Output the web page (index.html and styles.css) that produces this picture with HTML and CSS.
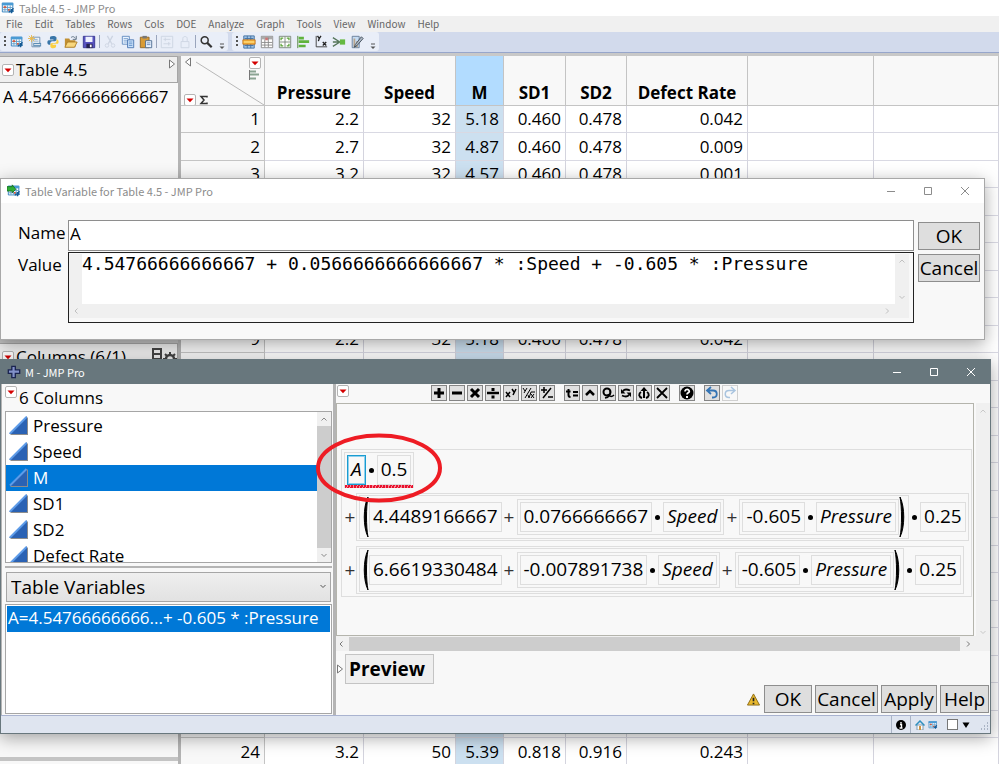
FILE: index.html
```
<!DOCTYPE html>
<html lang="en">
<head>
    <meta charset="UTF-8">
    <meta name="viewport" content="width=device-width, initial-scale=1.0">
    <title>Table 4.5 - JMP Pro</title>
    <link rel="stylesheet" href="styles.css">
</head>
<body>
    <!-- Shared icons -->
    <svg class="sprite" aria-hidden="true">
        <symbol id="red-menu" viewBox="0 0 12 12">
            <rect x="0.5" y="0.5" width="11" height="11" rx="1.5" fill="#fff" stroke="#b4b4b4"/>
            <path d="M2.5 4.5h7L6 8.3z" fill="#d40000"/>
        </symbol>
        <symbol id="continuous" viewBox="0 0 20 20">
            <path d="M1 19 19 1v18z" fill="#8d8d8d"/>
            <path d="M0 18 18 0v18z" fill="#2a62b4"/>
            <path d="M1 17.5 17.5 1" stroke="#5d9be8" stroke-width="2"/>
        </symbol>
        <symbol id="table-icon" viewBox="0 0 16 16">
            <path d="M1.500 2.500h12v10h-12z" fill="#fff" stroke="#2678b8"/>
            <path d="M1 2h13v3H1z" fill="#4a9bd4"/>
            <path d="M4.500 5v7M7.500 5v7M10.500 5v7M2 7.500h11M2 10h11" stroke="#5c9cc8"/>
            <path d="M3 6h3v2H3zM8 9h2v2H8z" fill="#d85a3c"/>
            <path d="M9 13c2-4 3 2 5-5M12 9v5M9.500 11.500h5" stroke="#155a94" stroke-width="1.500" fill="none"/>
        </symbol>
        <symbol id="min" viewBox="0 0 10 10"><path d="M1 5.500h8" stroke="currentColor"/></symbol>
        <symbol id="max" viewBox="0 0 10 10"><path d="M1.500 1.500h7v7h-7z" fill="none" stroke="currentColor"/></symbol>
        <symbol id="close" viewBox="0 0 10 10"><path d="M1 1l8 8M9 1 1 9" stroke="currentColor"/></symbol>
        <symbol id="chev-up" viewBox="0 0 8 8"><path d="M1.500 5.500 4 3l2.500 2.500" fill="none" stroke="currentColor"/></symbol>
        <symbol id="chev-down" viewBox="0 0 8 8"><path d="M1.500 3 4 5.500 6.500 3" fill="none" stroke="currentColor"/></symbol>
        <symbol id="chev-left" viewBox="0 0 8 8"><path d="M5.500 1.500 3 4l2.500 2.500" fill="none" stroke="currentColor"/></symbol>
        <symbol id="chev-right" viewBox="0 0 8 8"><path d="M3 1.500 5.500 4 3 6.500" fill="none" stroke="currentColor"/></symbol>
        <symbol id="more" viewBox="0 0 6 8"><path d="M1 2h4" stroke="#555"/><path d="M0.500 4.500h5L3 7z" fill="#555"/></symbol>
        <symbol id="lparen" viewBox="0 0 6 40"><path d="M5 0C0 10 0 30 5 40 3 30 3 10 5 0z" fill="#000" stroke="#000"/></symbol>
        <symbol id="rparen" viewBox="0 0 6 40"><path d="M1 0C6 10 6 30 1 40 3 30 3 10 1 0z" fill="#000" stroke="#000"/></symbol>
    </svg>

    <!-- Data table window -->
    <div class="main-window">
        <div class="main-title"><svg class="icon"><use href="#table-icon"/></svg><span>Table 4.5 - JMP Pro</span></div>
        <nav class="menu-bar">
            <a href="#">File</a><a href="#">Edit</a><a href="#">Tables</a><a href="#">Rows</a><a href="#">Cols</a><a href="#">DOE</a><a href="#">Analyze</a><a href="#">Graph</a><a href="#">Tools</a><a href="#">View</a><a href="#">Window</a><a href="#">Help</a>
        </nav>
        <div class="tool-bar">
            <div class="tool-group">
                <span class="grip"></span>
                <button class="tool" aria-label="New table"><svg class="icon"><use href="#table-icon"/></svg></button>
                <button class="tool" aria-label="New script"><svg class="icon" viewBox="0 0 16 16"><path d="M4.500 2.500h9v11h-9z" fill="#eef4fa" stroke="#6b8cab"/><path d="M6 9h9v4H6z" fill="#5d8db5"/><path d="M7 11h7" stroke="#fff"/><path d="M6 5h5M6 7h6" stroke="#8aa8c4"/><path d="M4 0v8M0 4h8M1 1l6 6M7 1 1 7" stroke="#e8b84a"/></svg></button>
                <button class="tool" aria-label="Python"><svg class="icon" viewBox="0 0 16 16"><path d="M8 1c-3 0-3.500 1-3.500 2.500V5H8.500v1H3C1 6 1 11 3.500 11H5V9c0-1 1-2 2-2h3c1 0 2-1 2-2V3c0-1.500-2-2-4-2z" fill="#3875a8"/><path d="M8 15c3 0 3.500-1 3.500-2.500V11H7.500v-1H13c2 0 2-5-.5-5H12v2c0 1-1 2-2 2H7c-1 0-2 1-2 2v2c0 1.500 1.500 2 3 2z" fill="#fbd040"/></svg></button>
                <button class="tool" aria-label="Open"><svg class="icon" viewBox="0 0 16 16"><path d="M1 14V4h5l1 2h6v8z" fill="#c18f31"/><path d="M1 14 4 8h11l-3 6z" fill="#f8d77d" stroke="#aa7b25"/><path d="M8 3c2-2 4-1 5 1M14 1v4h-4" stroke="#536879" fill="none"/></svg></button>
                <button class="tool" aria-label="Save"><svg class="icon" viewBox="0 0 16 16"><path d="M1.500 1.500h13v13h-13z" fill="#5753c0" stroke="#34318e"/><path d="M4 2h8v6H4z" fill="#eef1ff"/><path d="M5 10h7v5H5z" fill="#24224f"/><path d="M9 11h2v3H9z" fill="#fff"/></svg></button>
                <span class="rule"></span>
                <button class="tool faded" aria-label="Cut"><svg class="icon" viewBox="0 0 16 16"><path d="M5 1l5 9M11 1 6 10" stroke="#8d9bb0" stroke-width="1.500"/><circle cx="4.500" cy="12" r="2" fill="none" stroke="#8d9bb0"/><circle cx="11.500" cy="12" r="2" fill="none" stroke="#8d9bb0"/></svg></button>
                <button class="tool" aria-label="Copy"><svg class="icon" viewBox="0 0 16 16"><path d="M1.500 1.500h8v9h-8z" fill="#eaf4ff" stroke="#5b87bd"/><path d="M3 4h5M3 6h5M3 8h5" stroke="#80a6d2"/><path d="M7.500 5.500h7v9h-7z" fill="#cae1fa" stroke="#4774b0"/><path d="M9 8h4M9 10h4M9 12h4" stroke="#6595cc"/></svg></button>
                <button class="tool" aria-label="Paste"><svg class="icon" viewBox="0 0 16 16"><path d="M1.500 2.500h10v12h-10z" fill="#d89b35" stroke="#8b6426"/><path d="M4 1h5v3H4z" fill="#777"/><path d="M7.500 6.500h7v8h-7z" fill="#e9f3ff" stroke="#48698f"/><path d="M9 9h4M9 11h4" stroke="#6286b4"/></svg></button>
                <span class="rule"></span>
                <button class="tool faded" aria-label="Filter"><svg class="icon" viewBox="0 0 16 16"><path d="M1.500 1.500h13v13h-13zM4 5h8M4 10h8M6 3v4M10 8v4" fill="none" stroke="#8d9bb0"/></svg></button>
                <button class="tool faded" aria-label="Lock"><svg class="icon" viewBox="0 0 16 16"><path d="M3.500 7.500h9v7h-9zM5.500 7V4c0-3 5-3 5 0v3" fill="none" stroke="#8d9bb0"/></svg></button>
                <span class="rule"></span>
                <button class="tool" aria-label="Search"><svg class="icon" viewBox="0 0 16 16"><circle cx="6.500" cy="6" r="4" fill="none" stroke="#333" stroke-width="1.700"/><path d="m9.500 9 5 5" stroke="#333" stroke-width="2.500"/></svg></button>
                <svg class="more"><use href="#more"/></svg>
            </div>
            <div class="tool-group">
                <span class="grip"></span>
                <button class="tool" aria-label="Data filter"><svg class="icon" viewBox="0 0 16 16"><path d="M2 1h12v14H2z" fill="#9fc2e5" stroke="#416fa0"/><path d="M6 1v14M10 1v14M3 4h10M3 12h10" stroke="#416fa0"/><path d="M1 5.500h14v5H1z" fill="#f9b63c" stroke="#c0711b"/><path d="M2 8h12" stroke="#fff0a5"/></svg></button>
                <button class="tool" aria-label="Summary"><svg class="icon" viewBox="0 0 16 16"><path d="M1.500 1.500h13v13h-13z" fill="#fff" stroke="#858585"/><path d="M2 2h12v3H2z" fill="#aaa"/><path d="M5.500 5v9M9.500 3v11M2 8.500h12M2 11.500h12" stroke="#858585"/><path d="M6 3h3v3H6z" fill="#cb7575"/></svg></button>
                <button class="tool" aria-label="Tabulate"><svg class="icon" viewBox="0 0 16 16"><path d="M1.500 1.500h13v13h-13z" fill="#fff" stroke="#748074"/><path d="M8 2v12M2 8h12" stroke="#748074"/><path d="M3.500 6V3.500H6M12.500 6V3.500H10M3.500 10v2.500H6M12.500 10v2.500H10" fill="none" stroke="#5da43a" stroke-width="1.500"/></svg></button>
                <button class="tool" aria-label="Distribution"><svg class="icon" viewBox="0 0 16 16"><path d="M2 1v14" stroke="#4d7e39"/><path d="M3 2h6v3H3zM3 6h12v3H3zM3 11h8v3H3z" fill="#5fb33c"/></svg></button>
                <button class="tool" aria-label="Fit Y by X"><svg class="icon" viewBox="0 0 16 16"><path d="M2.500 1v12.500H15" fill="none" stroke="#333"/><path d="m4 1 2 3 2-3M6 4 5 7M10 8l4 4M14 8l-4 4" fill="none" stroke="#222" stroke-width="1.500"/></svg></button>
                <button class="tool" aria-label="Fit model"><svg class="icon" viewBox="0 0 16 16"><path d="M1 3l8 5M1 8h8M1 13l8-5" stroke="#55755a" stroke-width="1.500"/><path d="M9 5h6v6H9z" fill="#65b942"/></svg></button>
                <button class="tool" aria-label="Graph builder"><svg class="icon" viewBox="0 0 16 16"><path d="M2.500 1.500h8v13h-8z" fill="#c5dcf4" stroke="#637993"/><path d="M5 4v10M8 7v7" stroke="#b9a58d" stroke-width="2"/><path d="m6 11 7-9 2 2-7 8-3 2z" fill="#aeb9c5" stroke="#3c4855"/></svg></button>
                <svg class="more"><use href="#more"/></svg>
            </div>
        </div>

        <div class="workspace">
            <aside class="side">
                <section class="side-panel first">
                    <h2 class="side-head"><svg class="red"><use href="#red-menu"/></svg><span>Table 4.5</span>
                        <svg class="expand" viewBox="0 0 8 10"><path d="M1.500 1v8L6.500 5z" fill="#fff" stroke="#777"/></svg></h2>
                    <div class="variable">A 4.54766666666667</div>
                </section>
                <section class="side-panel grow">
                    <h2 class="side-head"><svg class="red"><use href="#red-menu"/></svg><span>Columns (6/1)</span>
                        <svg class="col-tools" viewBox="0 0 26 18"><path d="M2 1h8v16H2zM2 6h8M2 11h8" fill="none" stroke="#444" stroke-width="2"/><circle cx="19" cy="11" r="4" fill="none" stroke="#444" stroke-width="2.500"/><path d="M19 4v3M19 15v3M12 11h3M23 11h3M14 6l2 2M24 6l-2 2M14 16l2-2M24 16l-2-2" stroke="#444" stroke-width="2"/></svg></h2>
                </section>
                <section class="side-panel last"></section>
            </aside>

            <table class="grid">
                <colgroup>
                    <col class="c-row"><col class="c-pressure"><col class="c-speed"><col class="c-m"><col class="c-sd1"><col class="c-sd2"><col class="c-defect"><col class="c-blank"><col>
                </colgroup>
                <thead>
                    <tr>
                        <th class="corner">
                            <svg viewBox="0 0 83 49">
                                <path d="M15 6 83 49" stroke="#b8b8b8"/>
                                <path d="M9.500 2v8L4.500 6z" fill="#fff" stroke="#777"/>
                                <use href="#red-menu" x="68" y="1" width="12" height="12"/>
                                <path d="M68.500 14v10" stroke="#777"/><path d="M69 15.500h6M69 18.500h9M69 22.500h6" stroke="#8aa392" stroke-width="2"/>
                                <use href="#red-menu" x="3" y="38" width="12" height="12"/>
                                <path d="M26 41.500v-1h-6l3 3.500-3 3.500h6v-1" fill="none" stroke="#333" stroke-width="1.500"/>
                            </svg>
                        </th>
                        <th>Pressure</th><th>Speed</th><th class="picked">M</th><th>SD1</th><th>SD2</th><th>Defect Rate</th><th></th><th></th>
                    </tr>
                </thead>
                <tbody id="rows"></tbody>
            </table>
        </div>
    </div>

    <!-- Table variable dialog -->
    <div class="window variable-window">
        <div class="title-bar light">
            <svg class="icon" viewBox="0 0 16 16"><use href="#table-icon"/><path d="M0 3h6V1l4 5-4 4V8H0z" fill="#2fae37" stroke="#16721f"/></svg>
            <span>Table Variable for Table 4.5 - JMP Pro</span>
            <div class="controls"><svg><use href="#min"/></svg><svg><use href="#max"/></svg><svg><use href="#close"/></svg></div>
        </div>
        <div class="variable-body">
            <div class="fields">
                <label for="name">Name</label>
                <input id="name" type="text" value="A">
                <label for="value">Value</label>
                <div class="value-box">
                    <textarea id="value" wrap="off">4.54766666666667 + 0.0566666666666667 * :Speed + -0.605 * :Pressure</textarea>
                    <div class="v-bar"><svg><use href="#chev-up"/></svg><svg><use href="#chev-down"/></svg></div>
                    <div class="h-bar"><svg><use href="#chev-left"/></svg><svg><use href="#chev-right"/></svg></div>
                </div>
            </div>
            <div class="side-buttons">
                <button class="btn">OK</button>
                <button class="btn">Cancel</button>
            </div>
        </div>
    </div>

    <!-- Formula editor -->
    <div class="window formula-window">
        <div class="title-bar dark">
            <svg class="icon" viewBox="0 0 16 16"><path d="M5.500 1.500h4v4h5v4h-5v5h-4v-5h-4v-4h4z" fill="#8291ca" stroke="#1b2450" stroke-width="1.500"/></svg>
            <span>M - JMP Pro</span>
            <div class="controls"><svg><use href="#min"/></svg><svg><use href="#max"/></svg><svg><use href="#close"/></svg></div>
        </div>
        <div class="formula-body">
            <div class="picker">
                <div class="picker-head"><svg class="red"><use href="#red-menu"/></svg><span>6 Columns</span></div>
                <div class="column-box">
                    <ul class="columns">
                        <li><svg><use href="#continuous"/></svg>Pressure</li>
                        <li><svg><use href="#continuous"/></svg>Speed</li>
                        <li class="selected"><svg><use href="#continuous"/></svg>M</li>
                        <li><svg><use href="#continuous"/></svg>SD1</li>
                        <li><svg><use href="#continuous"/></svg>SD2</li>
                        <li><svg><use href="#continuous"/></svg>Defect Rate</li>
                    </ul>
                    <div class="scroll"><svg><use href="#chev-up"/></svg><span class="thumb"></span><svg><use href="#chev-down"/></svg></div>
                </div>
                <div class="splitter"></div>
                <div class="drop">
                    <select aria-label="Element list"><option>Table Variables</option></select>
                    <svg><use href="#chev-down"/></svg>
                </div>
                <ul class="variables"><li>A=4.54766666666...+ -0.605 * :Pressure</li></ul>
            </div>

            <div class="editor">
                <div class="editor-tools">
                    <svg class="red"><use href="#red-menu"/></svg>
                    <div class="keys">
                        <button aria-label="Add"><svg viewBox="0 0 14 14"><path d="M7 2v10M2 7h10" stroke="#000" stroke-width="3"/></svg></button>
                        <button aria-label="Subtract"><svg viewBox="0 0 14 14"><path d="M2 7h10" stroke="#000" stroke-width="3"/></svg></button>
                        <button aria-label="Multiply"><svg viewBox="0 0 14 14"><path d="m3 3 8 8M11 3l-8 8" stroke="#000" stroke-width="3"/></svg></button>
                        <button aria-label="Divide"><svg viewBox="0 0 14 14"><path d="M1 7h12" stroke="#000" stroke-width="2.500"/><path d="M5.500 2h3v3h-3zM5.500 9.500h3v3h-3z"/></svg></button>
                        <button aria-label="Power"><svg viewBox="0 0 14 14"><path d="m2 6 4 5M6 6l-4 5M8 3l2 3M12 3l-3 6" fill="none" stroke="#000" stroke-width="1.500"/></svg></button>
                        <button aria-label="Root"><svg viewBox="0 0 14 14"><path d="m1 2 2 3M5 2 2 7M3 12l6-10M6 9l1 3 2-6h4M9 8l3 4M12 8l-3 4" fill="none" stroke="#000"/></svg></button>
                        <button aria-label="Change sign"><svg viewBox="0 0 14 14"><path d="M4 1v6M1 4h6M3 12l8-10M8 11h5" stroke="#000" stroke-width="1.500"/></svg></button>
                        <i></i>
                        <button aria-label="Local variable"><svg viewBox="0 0 14 14"><path d="M3.500 3v6c0 2 1 2 2 2M1 5.500h4.500M8 6h5M8 9.500h5" fill="none" stroke="#000" stroke-width="2"/></svg></button>
                        <button aria-label="Insert"><svg viewBox="0 0 14 14"><path d="m3 9 4-4 4 4" fill="none" stroke="#000" stroke-width="2.500"/></svg></button>
                        <button aria-label="Delete expression"><svg viewBox="0 0 14 14"><circle cx="6" cy="6" r="3.500" fill="none" stroke="#000" stroke-width="2"/><path d="M4 12c5-1 6-4 5-8M7 8c1 3 4 3 6 1" fill="none" stroke="#000" stroke-width="1.500"/></svg></button>
                        <button aria-label="Switch"><svg viewBox="0 0 14 14"><path d="M4 5.500c1-3 5-2 7-1M10 8.500c-1 3-5 2-7 1" fill="none" stroke="#000" stroke-width="1.800"/><path d="M2 3v4.500h4.500zM12 11V6.500H7.500z"/></svg></button>
                        <button aria-label="Peel"><svg viewBox="0 0 14 14"><path d="M7 4v8M4 6c-3 2-2 5 1 6M10 6c3 2 2 5-1 6" fill="none" stroke="#000" stroke-width="2"/><path d="m3.500 5 3.500-4 3.500 4z"/></svg></button>
                        <button aria-label="Delete"><svg viewBox="0 0 14 14"><path d="m2 2 10 10M12 2 2 12" stroke="#000" stroke-width="1.800"/></svg></button>
                        <i></i>
                        <button aria-label="Help"><svg viewBox="0 0 14 14"><circle cx="7" cy="7" r="6.500"/><path d="M5 5.500c0-3 4.500-2.500 4.300 0C9 7 7 6.500 7 8.500" fill="none" stroke="#fff" stroke-width="1.700"/><path d="M6 10h2v2H6z" fill="#fff"/></svg></button>
                        <i></i>
                        <button aria-label="Undo"><svg viewBox="0 0 14 14"><path d="M6 1 2 4.500 6 8M2 4.500h6c5 0 5 7 0 7H7" fill="none" stroke="#3474b4" stroke-width="1.800"/></svg></button>
                        <button aria-label="Redo" class="off"><svg viewBox="0 0 14 14"><path d="m8 1 4 3.500L8 8M12 4.500H6c-5 0-5 7 0 7h1" fill="none" stroke="#a9c4df" stroke-width="1.500"/></svg></button>
                    </div>
                </div>
                <div class="canvas-row">
                    <div class="canvas">
                        <div class="expr">
                            <div class="term start"><span class="box var current">A</span><b></b><span class="box">0.5</span></div>
                            <div class="line">
                                <span class="plus">+</span>
                                <div class="term outer">
                                    <div class="term group"><svg class="paren"><use href="#lparen"/></svg><span class="box">4.4489166667</span><span class="plus">+</span>
                                        <div class="term"><span class="box">0.0766666667</span><b></b><span class="box var">Speed</span></div><span class="plus">+</span>
                                        <div class="term"><span class="box">-0.605</span><b></b><span class="box var">Pressure</span></div><svg class="paren"><use href="#rparen"/></svg>
                                    </div><b></b><span class="box">0.25</span>
                                </div>
                            </div>
                            <div class="line">
                                <span class="plus">+</span>
                                <div class="term outer">
                                    <div class="term group"><svg class="paren"><use href="#lparen"/></svg><span class="box">6.6619330484</span><span class="plus">+</span>
                                        <div class="term"><span class="box">-0.007891738</span><b></b><span class="box var">Speed</span></div><span class="plus">+</span>
                                        <div class="term"><span class="box">-0.605</span><b></b><span class="box var">Pressure</span></div><svg class="paren"><use href="#rparen"/></svg>
                                    </div><b></b><span class="box">0.25</span>
                                </div>
                            </div>
                        </div>
                    </div>
                    <div class="canvas-v"><svg><use href="#chev-up"/></svg><svg><use href="#chev-down"/></svg></div>
                </div>
                <div class="canvas-h"><svg><use href="#chev-left"/></svg><span class="thumb"></span><svg><use href="#chev-right"/></svg></div>
                <div class="preview"><svg viewBox="0 0 8 10"><path d="M1.500 1v8L6.500 5z" fill="#fff" stroke="#777"/></svg><button>Preview</button></div>
                <div class="actions">
                    <svg viewBox="0 0 14 14"><path d="M7 1 13.500 13H.5z" fill="#e9b92e" stroke="#8a6a13"/><path d="M7 5v4M7 10.500V12" stroke="#222" stroke-width="1.800"/></svg>
                    <button class="btn ok">OK</button>
                    <button class="btn cancel">Cancel</button>
                    <button class="btn apply">Apply</button>
                    <button class="btn help">Help</button>
                </div>
            </div>
        </div>
        <div class="status">
            <div class="cell"><svg viewBox="0 0 10 10"><circle cx="5" cy="5" r="5"/><path d="M5 2v1.500M4 4.500h1.500V8M3.500 8h3" stroke="#fff" stroke-width="1.400" fill="none"/></svg></div>
            <div class="cell">
                <svg viewBox="0 0 10 10"><path d="M2 5h6v5H2z" fill="#fff" stroke="#7e9bb0"/><path d="M.5 5.500 5 1l4.500 4.500" fill="none" stroke="#2e8fbf" stroke-width="1.500"/><path d="M4 6h2v4H4z" fill="#d09440"/></svg>
                <svg viewBox="0 0 16 16"><use href="#table-icon"/></svg>
                <input type="checkbox" aria-label="Window selection">
                <svg viewBox="0 0 10 10"><path d="M1.500 2.500h7L5 8z"/></svg>
            </div>
            <svg class="sizer" viewBox="0 0 10 10"><path d="M8 1h1M8 4h1M8 7h1M5 4h1M5 7h1M2 7h1" stroke="#a9b3c4" stroke-width="2"/></svg>
        </div>
        <svg class="marker" viewBox="0 0 126 70"><ellipse cx="63" cy="35" rx="61" ry="32.500" fill="none" stroke="#ee1c24" stroke-width="4"/></svg>
    </div>

    <script>
        const visible = {
            1: ['2.2', '32', '5.18', '0.460', '0.478', '0.042'],
            2: ['2.7', '32', '4.87', '0.460', '0.478', '0.009'],
            3: ['3.2', '32', '4.57', '0.460', '0.478', '0.001'],
            9: ['2.2', '32', '5.18', '0.460', '0.478', '0.042'],
            24: ['3.2', '50', '5.39', '0.818', '0.916', '0.243']
        };
        const body = document.getElementById('rows');
        for (let i = 1; i <= 24; i++) {
            const row = body.insertRow();
            const values = visible[i] || [];
            row.insertCell().textContent = visible[i] ? i : '';
            for (let c = 0; c < 8; c++) {
                row.insertCell().textContent = values[c] || '';
            }
        }
    </script>
</body>
</html>
```
FILE: styles.css
```
/* --- GENERAL --- */
* {
    box-sizing: border-box;
}

body {
    margin: 0;
    height: 100vh;
    position: relative;
    overflow: hidden;
    background: #fff;
    color: #000;
    font-family: "Open Sans", "Noto Sans", sans-serif;
    font-size: 17px;
    line-height: 24px;
}

button, input, select, textarea {
    font: inherit;
    color: inherit;
    margin: 0;
    padding: 0;
    border-radius: 0;
}

svg {
    display: block;
    flex: none;
}

ul {
    list-style: none;
    margin: 0;
    padding: 0;
}

.sprite {
    position: absolute;
    width: 0;
    height: 0;
}

.icon {
    width: 14px;
    height: 14px;
}

.red {
    width: 12px;
    height: 12px;
}

/* --- MAIN WINDOW --- */
.main-window {
    height: 100%;
    display: flex;
    flex-direction: column;
}

.main-title, .menu-bar, .title-bar {
    font-family: "Noto Sans CJK SC", "Open Sans", sans-serif;
    font-size: 10px;
    line-height: 16px;
}

.main-title {
    display: flex;
    align-items: center;
    gap: 4px;
    height: 16px;
    flex: none;
    padding-left: 1px;
    color: #8c8c8c;
}

.menu-bar {
    display: flex;
    flex: none;
    height: 16px;
    gap: 12px;
    padding-left: 6px;
    background: #f0f0f0;
}

.menu-bar a {
    color: #666;
    text-decoration: none;
}

.main-title, .title-bar {
    font-size: 11px;
}

.tool-bar {
    display: flex;
    flex: none;
    gap: 4px;
    height: 24px;
    background: #d2daec;
    border-bottom: 3px solid #c8c8c8;
    box-shadow: inset 0 -1px #97a6cb;
}

.tool-group {
    display: flex;
    align-items: center;
    height: 19px;
    background: #e9eef8;
    border-radius: 3px;
    padding: 0 2px;
}

.grip {
    width: 2px;
    height: 12px;
    margin: 0 2px;
    background: repeating-linear-gradient(#555 0 2px, transparent 2px 4px);
}

.tool {
    width: 18px;
    height: 18px;
    padding: 2px;
    border: 0;
    background: none;
}

.faded {
    opacity: .3;
}

.rule {
    width: 1px;
    height: 13px;
    margin: 0 1px;
    background: #9aa5bc;
}

.more {
    width: 6px;
    height: 8px;
    margin: 8px 1px 0 4px;
}

.workspace {
    display: flex;
    flex: 1;
    min-height: 0;
    overflow: hidden;
}

/* --- SIDE PANELS --- */
.side {
    display: flex;
    flex-direction: column;
    gap: 4px;
    flex: none;
    width: 181px;
    background: #c4c4c4;
    border-right: 3px solid #b4b4b4;
}

.side-panel {
    background: #f8f8f8;
}

.side-panel.first {
    height: 283px;
}

.side-panel.grow {
    flex: 1;
}

.side-panel.last {
    height: 3px;
}

.side-head {
    display: flex;
    align-items: center;
    gap: 2px;
    height: 27px;
    margin: 0;
    padding-left: 2px;
    background: #efefef;
    border: 1px solid #a6a6a6;
    border-left: 0;
    font-size: 17px;
    font-weight: normal;
}

.expand {
    width: 8px;
    height: 10px;
    margin: 0 1px 12px auto;
}

.col-tools {
    width: 26px;
    height: 18px;
    margin-left: auto;
}

.variable {
    padding: 2px 0 0 3px;
    white-space: nowrap;
}

/* --- DATA GRID --- */
.grid {
    flex: 1;
    width: 0;
    height: 0;
    table-layout: fixed;
    border-collapse: separate;
    border-spacing: 0;
}

.c-row { width: 84px; }
.c-pressure { width: 99px; }
.c-speed { width: 92px; }
.c-m { width: 48px; }
.c-sd1 { width: 62px; }
.c-sd2 { width: 61px; }
.c-defect { width: 121px; }
.c-blank { width: 126px; }

.grid th {
    height: 50px;
    padding: 0;
    vertical-align: bottom;
    background: #f8f8f8;
    border-right: 1px solid #c4c4c4;
    border-bottom: 1px solid #c4c4c4;
    font-weight: bold;
    line-height: 24px;
}

.grid th.picked {
    background: #b2dcff;
}

.corner svg {
    width: 83px;
    height: 49px;
}

.grid td {
    height: 27px;
    padding: 0 4px 0 0;
    text-align: right;
    line-height: 24px;
    border-right: 1px solid #d4d4de;
    border-bottom: 1px solid #d9d9e3;
}

.grid tr:nth-child(even) td {
    height: 28px;
}

.grid td:first-child {
    background: #f8f8f8;
    border-color: #c4c4c4;
}

.grid td:nth-child(4) {
    background: #cce0f0;
}

/* --- WINDOWS --- */
.window {
    position: absolute;
    left: 0;
    background: #f8f8f8;
    display: flex;
    flex-direction: column;
    box-shadow: 0 4px 16px rgba(0, 0, 0, .35);
}

.title-bar {
    display: flex;
    align-items: center;
    flex: none;
    gap: 4px;
    height: 24px;
    padding: 0 14px 0 6px;
}

.title-bar.light {
    background: #fff;
    color: #8c8c8c;
}

.title-bar.dark {
    background: #68777d;
    color: #fff;
    height: 25px;
}

.controls {
    display: flex;
    gap: 27px;
    margin-left: auto;
}

.controls svg {
    width: 10px;
    height: 10px;
}

.btn {
    height: 28px;
    border: 1px solid #8e8e8e;
    background: #dedede;
    font-size: 19px;
    line-height: 24px;
    text-align: center;
}

/* --- TABLE VARIABLE DIALOG --- */
.variable-window {
    top: 178px;
    right: 14px;
    height: 162px;
    border: 1px solid #a8a8a8;
}

.variable-body {
    display: flex;
    gap: 4px;
    padding: 17px 4px 0 17px;
}

.fields {
    flex: 1;
    display: grid;
    grid-template-columns: 50px 1fr;
    row-gap: 1px;
}

.fields label {
    padding-top: 1px;
    white-space: nowrap;
}

.fields input {
    width: 100%;
    height: 31px;
    padding: 0 1px 4px;
    border: 1px solid #8e8e8e;
    background: #fff;
}

.value-box {
    display: grid;
    grid-template-columns: 1fr 14px;
    grid-template-rows: 50px 14px;
    padding: 1px 4px 4px 0;
    border: 1px solid #222;
    color: #c0c0c0;
}

.value-box textarea {
    margin: 0 0 0 13px;
    box-shadow: -13px 0 #f0f0f0;
    border: 0;
    resize: none;
    overflow: hidden;
    background: #fff;
    color: #000;
    font-family: "DejaVu Sans Mono", monospace;
    font-size: 18px;
    line-height: 20px;
}

.v-bar, .h-bar {
    display: flex;
    justify-content: space-between;
    background: #f0f0f0;
    padding: 3px;
}

.v-bar {
    flex-direction: column;
}

.h-bar {
    grid-column: 1 / -1;
    padding-right: 18px;
}

.v-bar svg, .h-bar svg {
    width: 8px;
    height: 8px;
}

.side-buttons {
    display: flex;
    flex-direction: column;
    gap: 4px;
    width: 62px;
    padding-top: 2px;
}

/* --- FORMULA EDITOR --- */
.formula-window {
    top: 359px;
    right: 8px;
    height: 375px;
    border: 1px solid #68777d;
    border-top: 0;
}

.formula-body {
    display: flex;
    flex: 1;
    min-height: 0;
}

.picker {
    display: flex;
    flex-direction: column;
    width: 335px;
    flex: none;
    padding: 0 1px 1px 3px;
    border-right: 3px solid #b4b4b4;
    border-left: 1px solid #b4b4b4;
}

.picker-head {
    display: flex;
    height: 27px;
    padding: 2px 0 0;
    gap: 2px;
}

.column-box {
    display: flex;
    height: 152px;
    border: 1px solid #a6a6a6;
    background: #fff;
}

.columns {
    flex: 1;
    overflow: hidden;
    padding: 1px 0;
}

.columns li {
    display: flex;
    align-items: center;
    gap: 4px;
    height: 26px;
    padding-left: 3px;
}

.columns svg {
    width: 20px;
    height: 20px;
}

.columns .selected {
    background: #0078d7;
    color: #fff;
}

.scroll {
    display: flex;
    flex-direction: column;
    align-items: center;
    gap: 3px;
    width: 14px;
    padding: 3px 0;
    background: #f0f0f0;
    color: #888;
}

.scroll svg, .canvas-v svg, .canvas-h svg, .drop svg {
    width: 8px;
    height: 8px;
}

.scroll .thumb {
    flex: 1;
    align-self: stretch;
    background: #cdcdcd;
}

.splitter {
    height: 2px;
    margin: 3px 0 4px;
    background: #b4b4b4;
}

.drop {
    position: relative;
    height: 30px;
    margin: 0 1px 2px;
    color: #555;
}

.drop select {
    appearance: none;
    width: 100%;
    height: 30px;
    padding: 0 4px;
    border: 1px solid #a6a6a6;
    background: linear-gradient(#efefef, #e2e2e2);
    color: #000;
    font-size: 19px;
}

.drop svg {
    position: absolute;
    right: 4px;
    top: 10px;
}

.variables {
    flex: 1;
    padding: 1px;
    border: 1px solid #a6a6a6;
    background: #fff;
}

.variables li {
    height: 26px;
    padding-left: 1px;
    white-space: nowrap;
    background: #0078d7;
    color: #fff;
    font-size: 17px;
}

.editor {
    display: flex;
    flex-direction: column;
    flex: 1;
    min-width: 0;
}

.editor-tools {
    display: flex;
    height: 19px;
    padding: 1px 1px 0;
    gap: 82px;
}

.keys {
    display: flex;
    gap: 2px;
}

.keys button {
    width: 16px;
    height: 16px;
    border: 1px solid #858585;
    background: #e0e0e0;
}

.keys button.off {
    border-color: #d0d0d0;
    background: #f8f8f8;
}

.keys svg {
    width: 14px;
    height: 14px;
}

.keys i {
    width: 5px;
}

.canvas-row {
    display: flex;
    gap: 2px;
    height: 233px;
}

.canvas {
    flex: 1;
    min-width: 0;
    overflow: hidden;
    padding: 45px 4px 0;
    border: 1px solid #b4b4ac;
}

.canvas-v {
    display: flex;
    flex-direction: column;
    justify-content: space-between;
    width: 14px;
    padding: 4px 3px 0;
    background: #f0f0f0;
    color: #c8c8c8;
}

.canvas-h {
    display: flex;
    align-items: center;
    gap: 4px;
    height: 15px;
    padding: 0 18px 0 1px;
    background: #f0f0f0;
    color: #777;
}

.canvas-h .thumb {
    flex: 1;
    height: 14px;
    background: #cdcdcd;
}

/* nested expression boxes */
.expr, .term, .box {
    border: 1px solid #dedede;
}

.expr {
    display: flex;
    flex-direction: column;
    align-items: flex-start;
    gap: 5px;
    width: fit-content;
    padding: 2px;
    font-size: 19px;
}

.term, .line {
    display: flex;
    align-items: center;
}

.term {
    padding: 2px;
}

.box {
    height: 30px;
    padding: 0 3px;
    line-height: 26px;
    white-space: nowrap;
}

.var {
    font-style: italic;
}

.current {
    border: 1px solid #1a9cd0;
    box-shadow: inset 0 0 0 1px #8fd0ee;
}

.start {
    position: relative;
}

.start::after {
    content: "";
    position: absolute;
    left: 0;
    right: 0;
    bottom: -1px;
    height: 3px;
    background: repeating-linear-gradient(110deg, #e8112d 0 2px, #f58a96 2px 3px);
}

.group {
    padding: 1px 3px;
}

.outer {
    padding: 1px 2px;
}

.term b {
    width: 5px;
    height: 5px;
    margin: 0 3px;
    border-radius: 50%;
    background: #000;
}

.plus {
    width: 15px;
    text-align: center;
    font-size: 19px;
    color: #333;
}

.line > .plus {
    width: 12px;
}

.paren {
    width: 6px;
    height: 40px;
}

.preview {
    display: flex;
    align-items: center;
    padding-top: 3px;
    gap: 1px;
}

.preview svg {
    width: 8px;
    height: 10px;
}

.preview button {
    width: 89px;
    height: 30px;
    padding-right: 5px;
    border: 1px solid #c4c4c4;
    background: #efefef;
    font-size: 19px;
    font-weight: bold;
}

.actions {
    display: flex;
    align-items: center;
    justify-content: flex-end;
    gap: 3px;
    padding: 1px 1px 0;
}

.actions > svg {
    width: 13px;
    height: 13px;
    margin-right: 1px;
}

.ok { width: 48px; }
.cancel { width: 63px; }
.apply { width: 56px; }
.help { width: 49px; }

/* --- STATUS BAR --- */
.status {
    display: flex;
    justify-content: flex-end;
    flex: none;
    height: 18px;
    padding-right: 1px;
    border-top: 1px solid #a9b3d0;
    background: #dfe5f0;
}

.cell {
    display: flex;
    align-items: center;
    gap: 3px;
    padding: 0 4px;
    border-left: 1px solid #a9b3c4;
}

.cell svg {
    width: 10px;
    height: 10px;
}

.cell input {
    appearance: none;
    width: 11px;
    height: 11px;
    margin-left: 6px;
    border: 1px solid #777;
    background: #fff;
}

.sizer {
    width: 10px;
    height: 10px;
    margin: 6px 0 0 4px;
}

/* hand-drawn ring over the first term */
.marker {
    position: absolute;
    left: 315px;
    top: 74px;
    width: 126px;
    height: 70px;
}
```
